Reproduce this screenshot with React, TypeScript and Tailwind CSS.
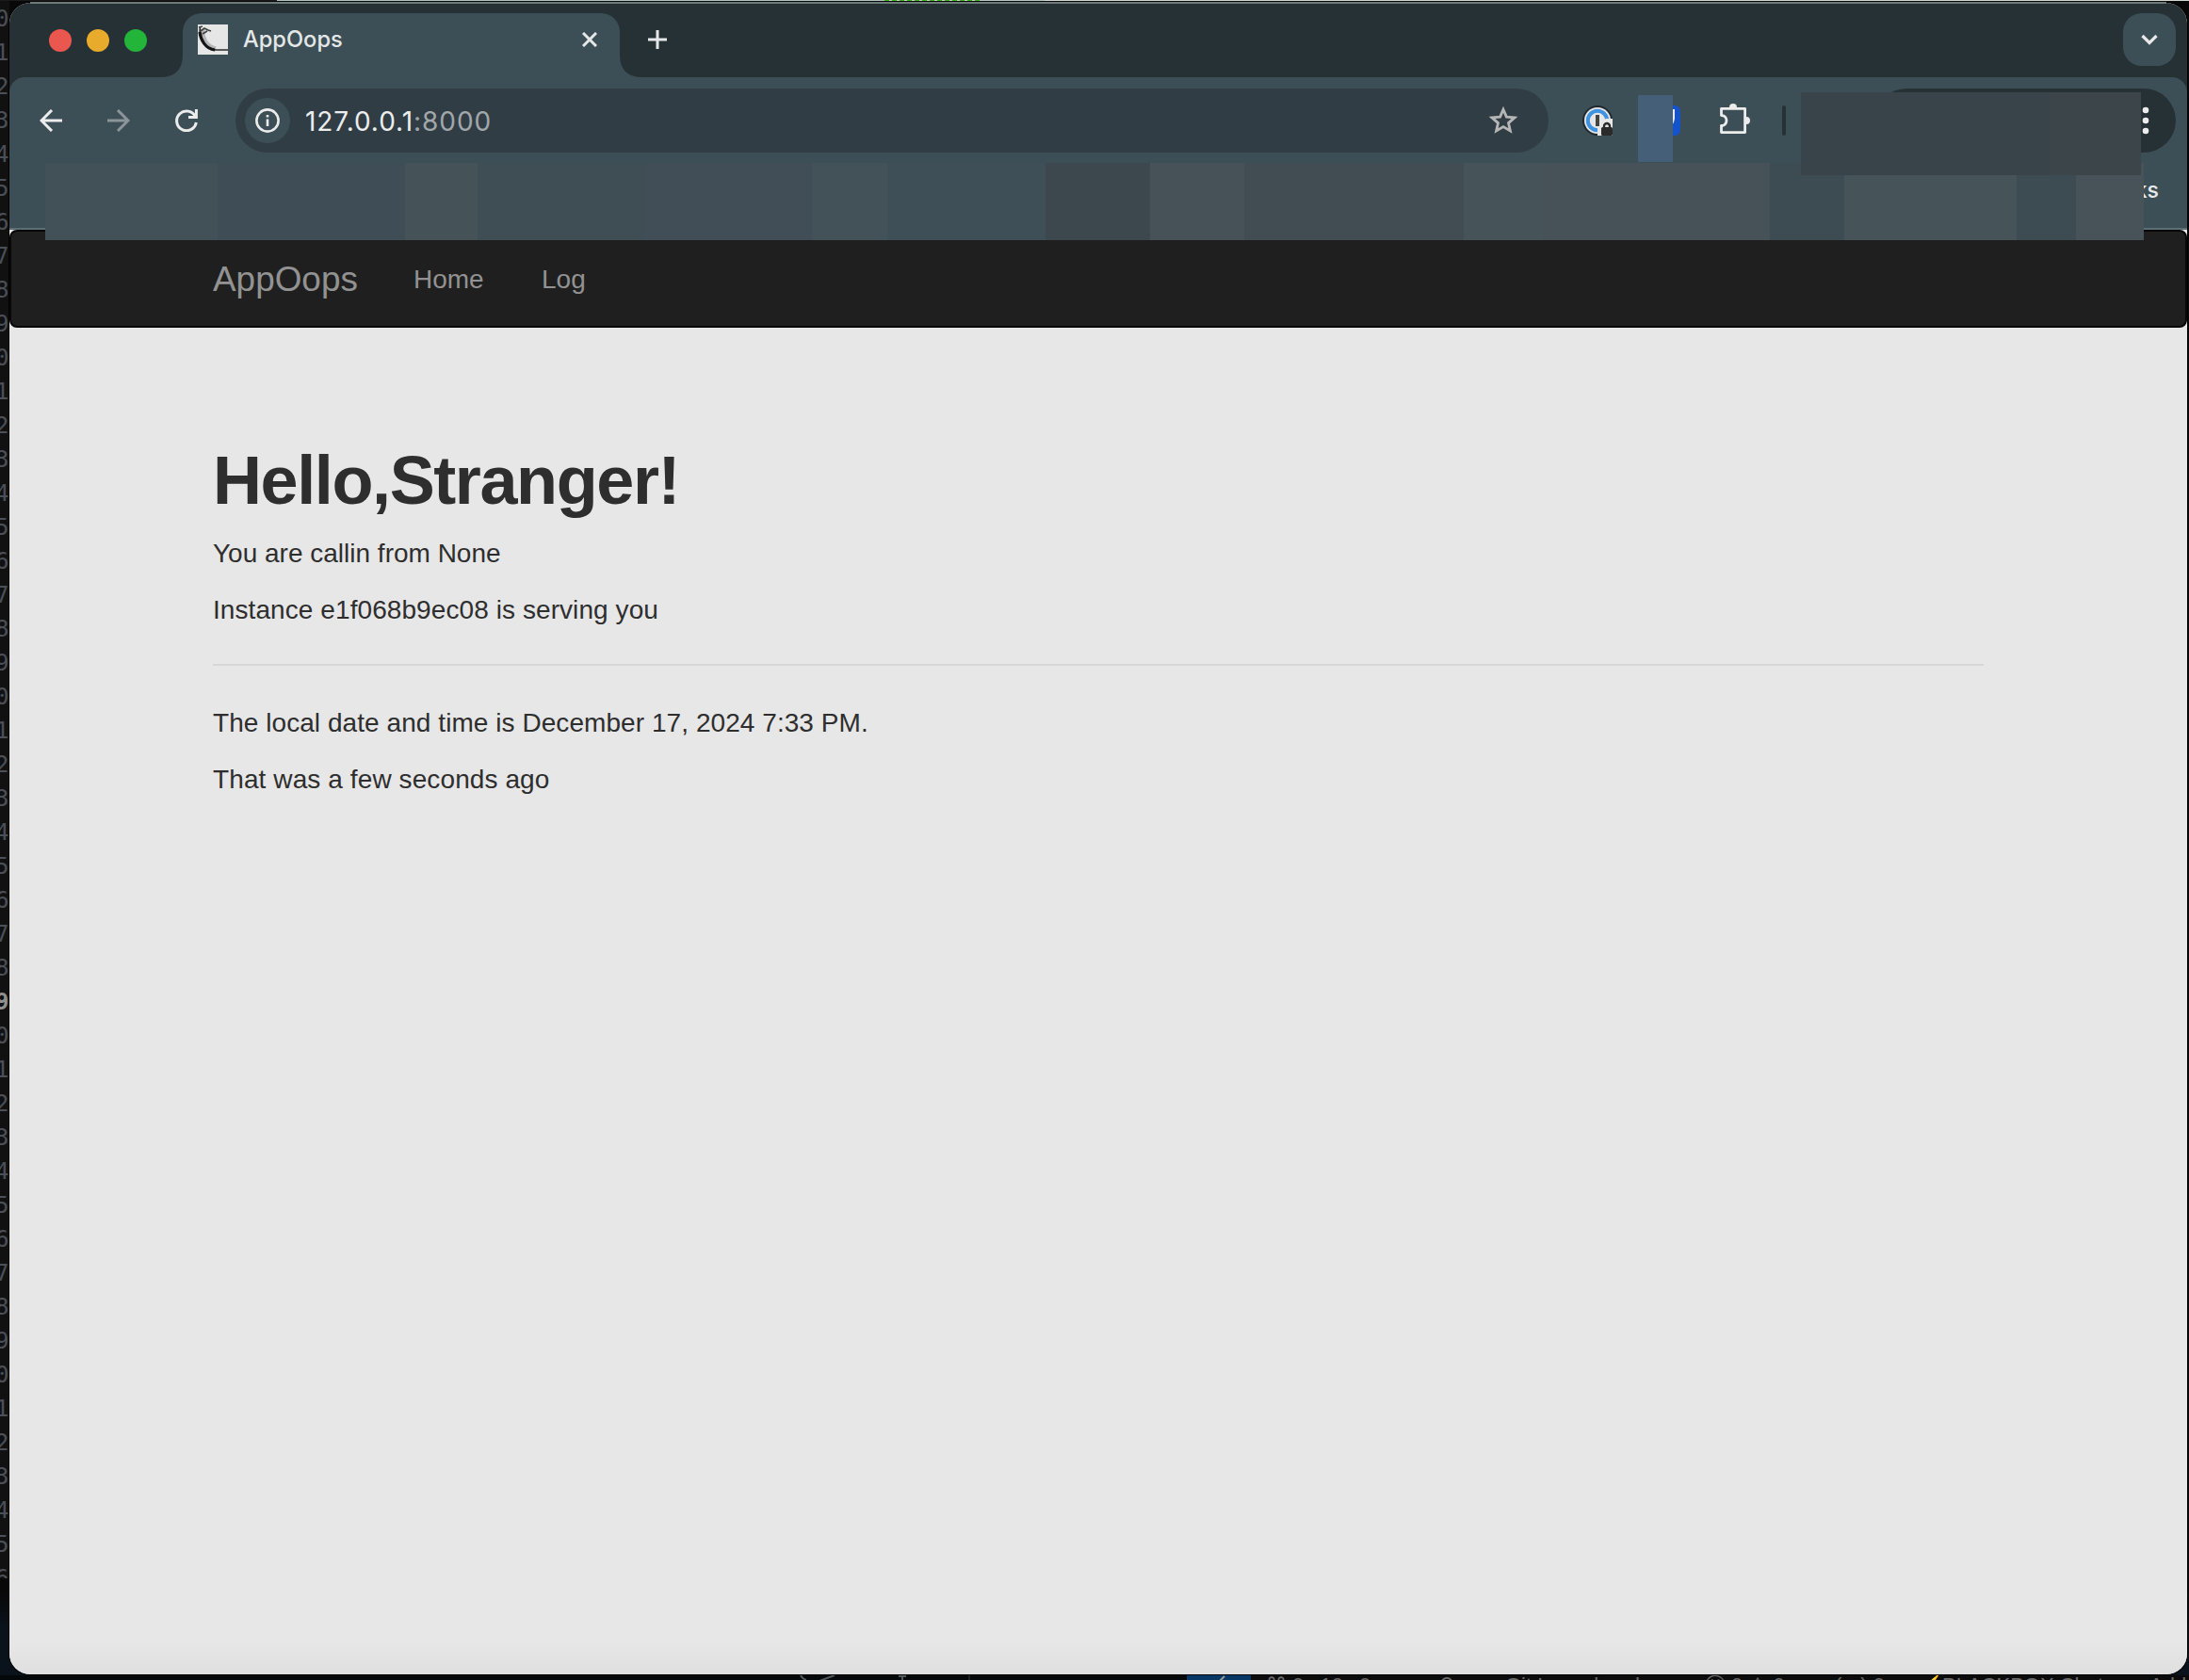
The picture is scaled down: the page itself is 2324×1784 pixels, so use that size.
import React from 'react';

const lines = Array.from({ length: 47 }, (_, i) => i);

const bookmarks = [
  'w-[183px] bg-[#425057]', 'w-[199px] bg-[#3f4e56]', 'w-[77px] bg-[#455257]', 'w-[177px] bg-[#3f4d55]',
  'w-[178px] bg-[#414e58]', 'w-[80px] bg-[#435259]', 'w-[168px] bg-[#3e4f58]', 'w-[111px] bg-[#3c484d]',
  'w-[100px] bg-[#465258]', 'w-[233px] bg-[#414d52]', 'w-[84px] bg-[#465359]', 'w-[241px] bg-[#465257]',
  'w-[79px] bg-[#3d4b53]', 'w-[183px] bg-[#465359]', 'w-[63px] bg-[#3d4b53]', 'w-[72px] bg-[#475358]',
];

function Gutter() {
  return (
    <div className="absolute left-0 top-0 h-[1676px] w-[10px] overflow-hidden bg-[#111111] pt-[2px] font-['DejaVu_Sans_Mono',monospace] text-[24px] leading-[36px] text-[#4a4f58]">
      {lines.map((n) => (
        <div key={n} className={n === 29 ? '-ml-[5px] h-[36px] font-bold text-[#8f8f8f]' : '-ml-[5px] h-[36px]'}>{n % 10}</div>
      ))}
    </div>
  );
}

function TopStrip() {
  return (
    <div className="absolute left-0 top-0 flex h-[1px] w-full">
      <div className="w-[294px] bg-[#1a1a1a]" />
      <div className="w-[645px] bg-[#b0c4c4]" />
      <div className="w-[101px] bg-[repeating-linear-gradient(90deg,#3cb41c_0_5px,#c8d4c8_5px_8px)]" />
      <div className="w-[69px] bg-[#b4c6c6]" />
      <div className="flex-1 bg-[#d0d6d0]" />
    </div>
  );
}

function StatusStrip() {
  return (
    <div className="absolute left-0 top-[1779px] flex h-[5px] w-full overflow-hidden bg-[#050809] font-['Liberation_Sans',sans-serif] text-[22px] leading-[22px] text-[#6c6c6c]">
      <div className="w-[848px]" />
      <svg className="h-[5px] w-[180px]" viewBox="0 0 180 5" fill="none" stroke="#50595e" strokeWidth="2"><path d="M2 0q2 4 6 5M38 0l-16 6M106 1h8M110 1v4" /></svg>
      <div className="w-[232px] border-l-2 border-[#222]" />
      <div className="w-[68px] bg-[#063765]"><svg width="68" height="5"><path d="M40 1l-5 5" stroke="#999" strokeWidth="2" /></svg></div>
      <div className="flex flex-1 items-start whitespace-pre bg-[#0b0b0b] pl-4">
        <span className="w-[184px]">⌘ 0↓ 10↑ 0</span><span className="w-[70px]">⚲</span><span className="w-[212px]">Git Launchpad</span><span className="w-[138px]">Ⓧ 0 ⚠ 0</span><span className="w-[90px]">(ᯤ) 0</span><span className="w-[24px] text-[#8a6418]">⚡</span><span className="w-[220px]">BLACKBOX Chat</span><span>Add</span>
      </div>
    </div>
  );
}

function TabStrip() {
  return (
    <div className="flex h-[79px] shrink-0 bg-[#263136] pt-[11px]">
      <div className="flex h-[58px] w-[160px] items-center gap-4 pl-[42px]">
        <i className="size-6 rounded-full bg-[#e9574f]" />
        <i className="size-6 rounded-full bg-[#e8ab2b]" />
        <i className="size-6 rounded-full bg-[#23b43a]" />
      </div>
      <div className="flex h-[68px] w-[512px]">
        <svg className="mt-auto" width="24" height="24"><path d="M24 0V24H0Q24 24 24 0Z" fill="#3d4f56" /></svg>
        <div className="flex h-[68px] w-[464px] items-start rounded-t-[20px] bg-[#3d4f56]">
          <svg className="ml-4 mt-3" width="32" height="32" viewBox="0 0 32 32">
            <path fill="#e6e6e6" d="M0 0h32v32H0z" />
            <path d="M5 5C4 14 9 24 19 26" fill="none" stroke="#b5b5b5" strokeWidth="5" />
            <path d="M2.5 2C1 13 6 26 19 27H32" fill="none" stroke="#2a2a2a" strokeWidth="1.6" />
            <path d="M2 8C3 16 8 26 18 27" fill="none" stroke="#151515" strokeWidth="3.2" />
            <path d="M1 3l4-1M3 7l4-3l4 2l3 1M5 10l5-3" fill="none" stroke="#444" strokeWidth="1.8" />
          </svg>
          <span className="ml-4 mt-[11px] w-[320px] font-[Inter,sans-serif] text-[24px] font-medium leading-[34px] text-[#e4e7e8]"><span className="inline-block origin-left scale-x-[0.985]">AppOops</span></span>
          <svg className="ml-[40px] mt-[20px]" width="16" height="16" stroke="#e6e8e8" strokeWidth="3"><path d="M1 1l14 14M15 1L1 15" /></svg>
        </div>
        <svg className="mt-auto" width="24" height="24"><path d="M0 0V24H24Q0 24 0 0Z" fill="#3d4f56" /></svg>
      </div>
      <svg className="ml-[6px] mt-[18px]" width="20" height="20" stroke="#e6e8e8" strokeWidth="3"><path d="M10 0v20M0 10h20" /></svg>
      <div className="ml-auto mr-[12px] flex h-[56px] w-[56px] items-center justify-center rounded-[20px] bg-[#3d4f56]">
        <svg width="18" height="12" fill="none" stroke="#e8e8e8" strokeWidth="3.2"><path d="M1.5 2L9 9.5L16.5 2" /></svg>
      </div>
    </div>
  );
}

function Toolbar() {
  return (
    <div className="relative flex h-[91px] shrink-0 items-start rounded-t-[16px] bg-[#3d4f56] pt-3">
      <div className="flex h-[68px] w-[240px] items-center gap-[48px] pl-[32px]">
        <svg width="24" height="24" fill="none" stroke="#ececec" strokeWidth="3"><path d="M13 1L2 12L13 23M2 12H24" /></svg>
        <svg width="24" height="24" fill="none" stroke="#8b9599" strokeWidth="3"><path d="M11 1L22 12L11 23M0 12H22" /></svg>
        <svg width="24" height="24" fill="none" stroke="#ececec" strokeWidth="3"><path d="M21.5 8A10.4 10.4 0 1 0 22.3 14M22.4 0V8.6H14" /></svg>
      </div>
      <div className="flex h-[68px] w-[1394px] items-center rounded-full bg-[#313d45] pl-[10px]">
        <div className="flex size-12 items-center justify-center rounded-full bg-[#3d4f56]">
          <svg width="26" height="26" fill="none" stroke="#ececec" strokeWidth="2.6"><circle cx="13" cy="13" r="11.6" /><path d="M13 11.5V19M13 7v2.6" /></svg>
        </div>
        <div className="ml-[16px] mt-px font-[Inter,sans-serif] text-[28px] tracking-[0.95px] text-[#ebedee]">127.0.0.1<span className="text-[#a2a7aa]">:8000</span></div>
        <svg className="ml-auto mr-[33px]" width="30" height="30" viewBox="0 0 30 30" fill="none" stroke="#b6b6b6" strokeWidth="2.8"><path d="M15 3.2L18.4 11.1L27 11.9L20.5 17.6L22.4 26L15 21.6L7.6 26L9.5 17.6L3 11.9L11.6 11.1Z" /></svg>
      </div>
      <div className="flex h-[68px] w-[268px] items-center pl-[36px]">
        <svg width="32" height="32">
          <circle cx="16" cy="16" r="16" fill="#20292d" /><circle cx="16" cy="16" r="14" fill="#e6e6e6" />
          <circle cx="16" cy="16" r="10.2" fill="none" stroke="#3d92e4" strokeWidth="4" />
          <path d="M16 20L25 14H32V32H16Z" fill="#e6e6e6" /><path d="M14 10h4v12h-4z" fill="#444" />
          <rect x="20" y="23" width="12" height="9" rx="1.5" fill="#2b2b2b" /><path d="M23 24v-2a3 3 0 0 1 6 0v2" fill="none" stroke="#2b2b2b" strokeWidth="2.4" />
        </svg>
        <div className="relative ml-[40px] h-8 w-8 overflow-hidden rounded-[6px] bg-[#1553cb]">
          <svg width="32" height="32"><path d="M7 4H26V14Q25 22 16 27Q7 22 7 14Z" fill="#e4e9f2" /></svg>
        </div>
        <svg className="ml-[42px]" width="34" height="36" viewBox="0 0 34 36" fill="none" stroke="#ececec" strokeWidth="2.8" strokeLinejoin="round">
          <path d="M1.5 5.4H26.6V30.6H1.5V23.5A5.5 5.5 0 0 0 1.5 12.5Z" />
          <path d="M10 5V4A4 4 0 0 1 18 4V5ZM27 14H28A4 4 0 0 1 28 22H27Z" fill="#ececec" stroke="none" />
        </svg>
        <div className="ml-[32px] h-8 w-1 shrink-0 rounded bg-[#263136]" />
      </div>
      <div className="ml-auto mr-[12px] flex h-[68px] w-[320px] items-center justify-end rounded-full bg-[#263136] pr-[28px]">
        <svg width="8" height="30" fill="#ececec"><circle cx="4" cy="4" r="3.3" /><circle cx="4" cy="15" r="3.3" /><circle cx="4" cy="26" r="3.3" /></svg>
      </div>
      <div className="absolute left-[1729px] top-[19px] h-[71px] w-[37px] bg-[#465f79]" />
      <div className="absolute left-[1902px] top-[16px] z-20 flex h-[88px] w-[361px]">
        <div className="w-[264px] bg-[#38444a]" /><div className="flex-1 bg-[#3b454a]" />
      </div>
    </div>
  );
}

function BookmarksBar() {
  return (
    <div className="relative z-10 flex h-[71px] shrink-0 border-b-2 border-[#5d6e75] bg-[#3d4f56] pl-[38px]">
      {bookmarks.map((c, i) => <div key={i} className={'h-[82px] shrink-0 ' + c} />)}
      <div className="flex w-[16px] justify-end overflow-hidden whitespace-nowrap pt-[12px] font-[Inter,sans-serif] text-[23px] font-medium leading-[34px] text-[#e8eaea]">All Bookmarks</div>
    </div>
  );
}

export default function App() {
  return (
    <div className="relative h-[1784px] w-[2324px] overflow-hidden bg-[linear-gradient(#080808_0_1690px,#0a131b_1730px)]">
      <Gutter />
      <TopStrip />
      <StatusStrip />
      <div className="absolute left-[10px] top-[3px] flex h-[1775px] w-[2312px] flex-col overflow-hidden rounded-[22px] bg-[#e7e7e7] shadow-[0_0_0_1px_#000]">
        <TabStrip />
        <div className="flex shrink-0 flex-col bg-[#263136]"><Toolbar /></div>
        <BookmarksBar />
        <nav className="flex h-[104px] shrink-0 items-center rounded-[8px] border-2 border-[#080808] bg-[#1f1f1f] pl-[214px] pt-[2px] font-['Liberation_Sans',sans-serif] text-[28px] text-[#929292]">
          <span className="w-[213px] text-[36px]"><span className="inline-block origin-left scale-x-[1.025]">AppOops</span></span>
          <span className="w-[136px]">Home</span>
          <span>Log</span>
        </nav>
        <main className="flex-1 bg-[linear-gradient(#e7e7e7_0_calc(100%_-_34px),#dfdfdf)] px-[216px] font-['Liberation_Sans',sans-serif] text-[28px] leading-[40px] text-[#2e2e2e]">
          <h1 className="mt-[122px] h-[80px] whitespace-nowrap text-[72px] font-bold leading-[80px] tracking-[-1.4px]">Hello,Stranger!</h1>
          <p className="mt-[18px]">You are callin from None</p>
          <p className="mt-[20px] tracking-[0.08px]">Instance e1f068b9ec08 is serving you</p>
          <hr className="mb-[41px] mt-[37px] border-t-2 border-[#d7d7d7]" />
          <p className="tracking-[0.06px]">The local date and time is December 17, 2024 7:33 PM.</p>
          <p className="mt-[20px] tracking-[0.1px]">That was a few seconds ago</p>
        </main>
      </div>
      <div className="absolute left-[32px] top-[2px] h-[2px] w-[2268px] bg-[#6f7b78]" />
    </div>
  );
}
